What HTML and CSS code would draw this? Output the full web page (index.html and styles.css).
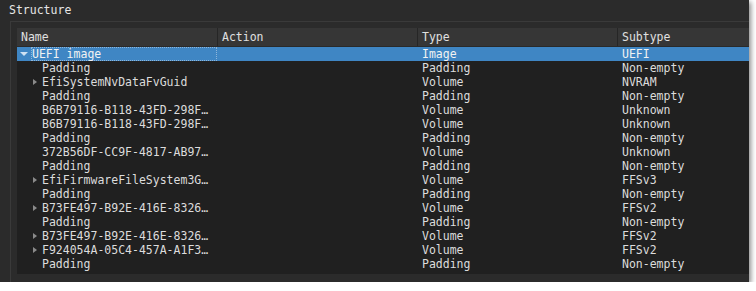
FILE: index.html
```html
<!DOCTYPE html>
<html lang="en">
<head>
    <meta charset="UTF-8">
    <title>Structure</title>
    <link rel="stylesheet" href="styles.css">
</head>
<body>
    <div class="window">
        <div class="title">Structure</div>
        <div class="group">
            <div class="tree">
                <div class="row header">
                    <div class="cell">Name</div>
                    <div class="cell">Action</div>
                    <div class="cell">Type</div>
                    <div class="cell">Subtype</div>
                </div>
                <div class="row selected">
                    <div class="cell name lvl0"><span class="arrow open"></span><span class="focus">UEFI image</span></div>
                    <div class="cell"></div>
                    <div class="cell">Image</div>
                    <div class="cell">UEFI</div>
                </div>
                <div class="row">
                    <div class="cell name lvl1"><span class="arrow none"></span>Padding</div>
                    <div class="cell"></div><div class="cell">Padding</div><div class="cell">Non-empty</div>
                </div>
                <div class="row">
                    <div class="cell name lvl1"><span class="arrow"></span>EfiSystemNvDataFvGuid</div>
                    <div class="cell"></div><div class="cell">Volume</div><div class="cell">NVRAM</div>
                </div>
                <div class="row">
                    <div class="cell name lvl1"><span class="arrow none"></span>Padding</div>
                    <div class="cell"></div><div class="cell">Padding</div><div class="cell">Non-empty</div>
                </div>
                <div class="row">
                    <div class="cell name lvl1"><span class="arrow none"></span>B6B79116-B118-43FD-298F…</div>
                    <div class="cell"></div><div class="cell">Volume</div><div class="cell">Unknown</div>
                </div>
                <div class="row">
                    <div class="cell name lvl1"><span class="arrow none"></span>B6B79116-B118-43FD-298F…</div>
                    <div class="cell"></div><div class="cell">Volume</div><div class="cell">Unknown</div>
                </div>
                <div class="row">
                    <div class="cell name lvl1"><span class="arrow none"></span>Padding</div>
                    <div class="cell"></div><div class="cell">Padding</div><div class="cell">Non-empty</div>
                </div>
                <div class="row">
                    <div class="cell name lvl1"><span class="arrow none"></span>372B56DF-CC9F-4817-AB97…</div>
                    <div class="cell"></div><div class="cell">Volume</div><div class="cell">Unknown</div>
                </div>
                <div class="row">
                    <div class="cell name lvl1"><span class="arrow none"></span>Padding</div>
                    <div class="cell"></div><div class="cell">Padding</div><div class="cell">Non-empty</div>
                </div>
                <div class="row">
                    <div class="cell name lvl1"><span class="arrow"></span>EfiFirmwareFileSystem3G…</div>
                    <div class="cell"></div><div class="cell">Volume</div><div class="cell">FFSv3</div>
                </div>
                <div class="row">
                    <div class="cell name lvl1"><span class="arrow none"></span>Padding</div>
                    <div class="cell"></div><div class="cell">Padding</div><div class="cell">Non-empty</div>
                </div>
                <div class="row">
                    <div class="cell name lvl1"><span class="arrow"></span>B73FE497-B92E-416E-8326…</div>
                    <div class="cell"></div><div class="cell">Volume</div><div class="cell">FFSv2</div>
                </div>
                <div class="row">
                    <div class="cell name lvl1"><span class="arrow none"></span>Padding</div>
                    <div class="cell"></div><div class="cell">Padding</div><div class="cell">Non-empty</div>
                </div>
                <div class="row">
                    <div class="cell name lvl1"><span class="arrow"></span>B73FE497-B92E-416E-8326…</div>
                    <div class="cell"></div><div class="cell">Volume</div><div class="cell">FFSv2</div>
                </div>
                <div class="row">
                    <div class="cell name lvl1"><span class="arrow"></span>F924054A-05C4-457A-A1F3…</div>
                    <div class="cell"></div><div class="cell">Volume</div><div class="cell">FFSv2</div>
                </div>
                <div class="row">
                    <div class="cell name lvl1"><span class="arrow none"></span>Padding</div>
                    <div class="cell"></div><div class="cell">Padding</div><div class="cell">Non-empty</div>
                </div>
            </div>
        </div>
    </div>
</body>
</html>
```

FILE: styles.css
```css
body {
    margin: 0;
    background-color: #fff;
    font-family: 'DejaVu Sans Mono', monospace;
    font-size: 11.5px;
    color: #dcdcdc;
}
.window {
    width: 749px;
    height: 282px;
    background-color: #2b2b2b;
    box-shadow: 2px 2px 5px rgba(0, 0, 0, 0.45);
    display: flex;
    flex-direction: column;
}
.title {
    height: 21px;
    line-height: 20px;
    padding-left: 9px;
    color: #e6e6e6;
}
.group {
    flex: 1;
    margin-left: 10px;
    border-top: 1px solid #3a3a3a;
    border-left: 1px solid #3a3a3a;
    padding: 6px 0 8px 6px;
    display: flex;
}
.tree {
    flex: 1;
    background-color: #202020;
}
.row {
    display: grid;
    grid-template-columns: 200px 200px 200px 1fr;
    height: 14px;
    line-height: 14px;
}
.cell {
    white-space: nowrap;
    overflow: hidden;
    padding-left: 5px;
}
.header {
    height: 18px;
    line-height: 18px;
    background-color: #363636;
    border-bottom: 1px solid #2a2a2a;
    color: #e0e0e0;
}
.header .cell {
    padding-left: 4px;
    border-left: 1px solid #262626;
}
.header .cell:first-child {
    border-left: none;
}
.selected {
    background-color: #3f86c4;
    color: #f2f2f2;
}
.name {
    display: flex;
    align-items: center;
}
.lvl0 {
    padding-left: 3px;
}
.lvl1 {
    padding-left: 14px;
}
.arrow {
    width: 11px;
    height: 14px;
    flex: none;
    position: relative;
}
.arrow::before {
    content: '';
    position: absolute;
    left: 2px;
    top: 4px;
    border-left: 4px solid #8a8a8a;
    border-top: 3.5px solid transparent;
    border-bottom: 3.5px solid transparent;
}
.arrow.open::before {
    left: 0;
    top: 5px;
    border-top: 4px solid #cfe2f3;
    border-left: 4px solid transparent;
    border-right: 4px solid transparent;
    border-bottom: none;
}
.arrow.none::before {
    display: none;
}
.focus {
    border: 1px dotted #8fb6da;
    line-height: 12px;
    padding: 0 2px 0 0;
    flex: 1;
    margin-right: 0;
}
```
